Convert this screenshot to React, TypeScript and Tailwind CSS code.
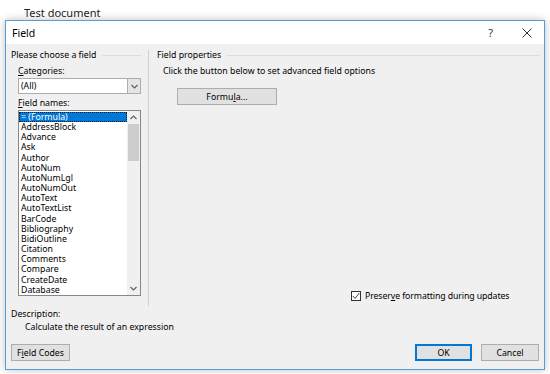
import { useState } from 'react';

const fieldNames = [
  '= (Formula)',
  'AddressBlock',
  'Advance',
  'Ask',
  'Author',
  'AutoNum',
  'AutoNumLgl',
  'AutoNumOut',
  'AutoText',
  'AutoTextList',
  'BarCode',
  'Bibliography',
  'BidiOutline',
  'Citation',
  'Comments',
  'Compare',
  'CreateDate',
  'Database',
];

const Chevron = ({ up }: { up?: boolean }) => (
  <svg width="7" height="5" viewBox="0 0 7 5" className="block">
    <polyline
      points={up ? '0.5,4 3.5,1 6.5,4' : '0.5,1 3.5,4 6.5,1'}
      fill="none"
      stroke="#606060"
      strokeWidth="1.2"
    />
  </svg>
);

const GroupHeader = ({ title }: { title: string }) => (
  <div className="flex items-center h-[10px]">
    <span className="leading-[10px] whitespace-nowrap">{title}</span>
    <div className="flex-1 h-px bg-[#dcdcdc] ml-[6px]" />
  </div>
);

export default function App() {
  const [selected, setSelected] = useState(0);
  const [preserve, setPreserve] = useState(true);

  return (
    <div className="w-[550px] h-[374px] bg-white overflow-hidden text-black font-['Noto_Sans',sans-serif] text-[8.75px]">
      <div className="h-[20px] pl-[24px] pt-[6px] text-[11px] leading-[14px] text-[#222]">Test document</div>

      {/* Dialog window */}
      <div className="ml-[5px] w-[540px] h-[350px] border border-[#5b9bd5] bg-[#f0f0f0] shadow-[0_0_8px_rgba(0,0,0,0.25)] flex flex-col">
        {/* Title bar */}
        <div className="h-[23px] bg-white flex items-center pl-[6px] pr-[12px]">
          <span className="text-[10.5px] leading-[12px]">Field</span>
          <span className="ml-auto text-[11px] leading-[12px] text-[#333] mr-[29px]">?</span>
          <svg width="10" height="10" viewBox="0 0 10 10" className="block">
            <path d="M0.5 0.5L9.5 9.5M9.5 0.5L0.5 9.5" stroke="#333" strokeWidth="1" />
          </svg>
        </div>

        {/* Body */}
        <div className="flex-1 flex flex-col pl-[5px] pr-[4px] pt-[6px]">
          <div className="flex h-[256px]">
            {/* Left column */}
            <div className="w-[130px] flex flex-col">
              <GroupHeader title="Please choose a field" />
              <div className="pl-[7px] flex flex-col">
                <div className="mt-[6px] h-[10px] leading-[10px]">
                  <span className="underline">C</span>ategories:
                </div>
                <div className="mt-[2px] h-[16px] w-[123px] border border-[#adadad] bg-white flex">
                  <div className="flex-1 pl-[2px] leading-[14px]">(All)</div>
                  <div className="w-[13px] bg-[#e5e5e5] border-l border-[#adadad] flex items-center justify-center">
                    <Chevron />
                  </div>
                </div>
                <div className="mt-[4px] h-[10px] leading-[10px]">
                  <span className="underline">F</span>ield names:
                </div>
                <div className="mt-[2px] h-[186px] w-[123px] border border-[#828790] bg-white flex">
                  <div className="flex-1 pt-[1px] overflow-hidden">
                    {fieldNames.map((name, i) => (
                      <div
                        key={name}
                        onClick={() => setSelected(i)}
                        className={`h-[10.17px] leading-[10.17px] pl-[2px] whitespace-nowrap ${
                          i === selected
                            ? 'bg-[#0078d7] text-white outline outline-1 outline-dotted outline-[#1a1a1a] -outline-offset-1'
                            : ''
                        }`}
                      >
                        {name}
                      </div>
                    ))}
                  </div>
                  {/* Scrollbar */}
                  <div className="w-[13px] bg-[#f0f0f0] flex flex-col items-center">
                    <div className="h-[13px] flex items-center justify-center">
                      <Chevron up />
                    </div>
                    <div className="w-[11px] h-[37px] bg-[#cdcdcd]" />
                    <div className="flex-1" />
                    <div className="h-[13px] flex items-center justify-center">
                      <Chevron />
                    </div>
                  </div>
                </div>
              </div>
            </div>

            {/* Divider */}
            <div className="ml-[7px] w-px bg-[#d0d0d0]" />

            {/* Right column */}
            <div className="flex-1 ml-[8px] flex flex-col">
              <GroupHeader title="Field properties" />
              <div className="mt-[6px] pl-[6px] h-[10px] leading-[10px]">
                Click the button below to set advanced field options
              </div>
              <div className="mt-[12px] ml-[20px] w-[100px] h-[17px] bg-[#e1e1e1] border border-[#adadad] flex items-center justify-center leading-[10px]">
                <span>
                  Formu<span className="underline">l</span>a...
                </span>
              </div>
              <div className="mt-[186px] ml-[194px] flex items-center h-[10px]" onClick={() => setPreserve(!preserve)}>
                <div className="w-[10px] h-[10px] border border-[#333] bg-white flex items-center justify-center">
                  {preserve && (
                    <svg width="8" height="8" viewBox="0 0 8 8" className="block">
                      <polyline points="0.8,4 3,6.4 7.4,1" fill="none" stroke="#444" strokeWidth="1" />
                    </svg>
                  )}
                </div>
                <span className="ml-[4px] leading-[10px] tracking-[-0.1px]">
                  Preser<span className="underline">v</span>e formatting during updates
                </span>
              </div>
            </div>
          </div>

          {/* Description */}
          <div className="mt-[3px] h-[10px] leading-[10px]">Description:</div>
          <div className="mt-[3px] pl-[14px] h-[10px] leading-[10px]">Calculate the result of an expression</div>

          {/* Buttons */}
          <div className="mt-[12px] flex pr-[1px]">
            <div className="w-[59px] h-[17px] bg-[#e1e1e1] border border-[#adadad] flex items-center justify-center leading-[10px]">
              <span>
                F<span className="underline">i</span>eld Codes
              </span>
            </div>
            <div className="ml-auto w-[57px] h-[17px] bg-[#e1e1e1] border-2 border-[#0078d7] flex items-center justify-center leading-[10px]">
              OK
            </div>
            <div className="ml-[9px] w-[58px] h-[17px] bg-[#e1e1e1] border border-[#adadad] flex items-center justify-center leading-[10px]">
              Cancel
            </div>
          </div>
        </div>
      </div>
    </div>
  );
}
